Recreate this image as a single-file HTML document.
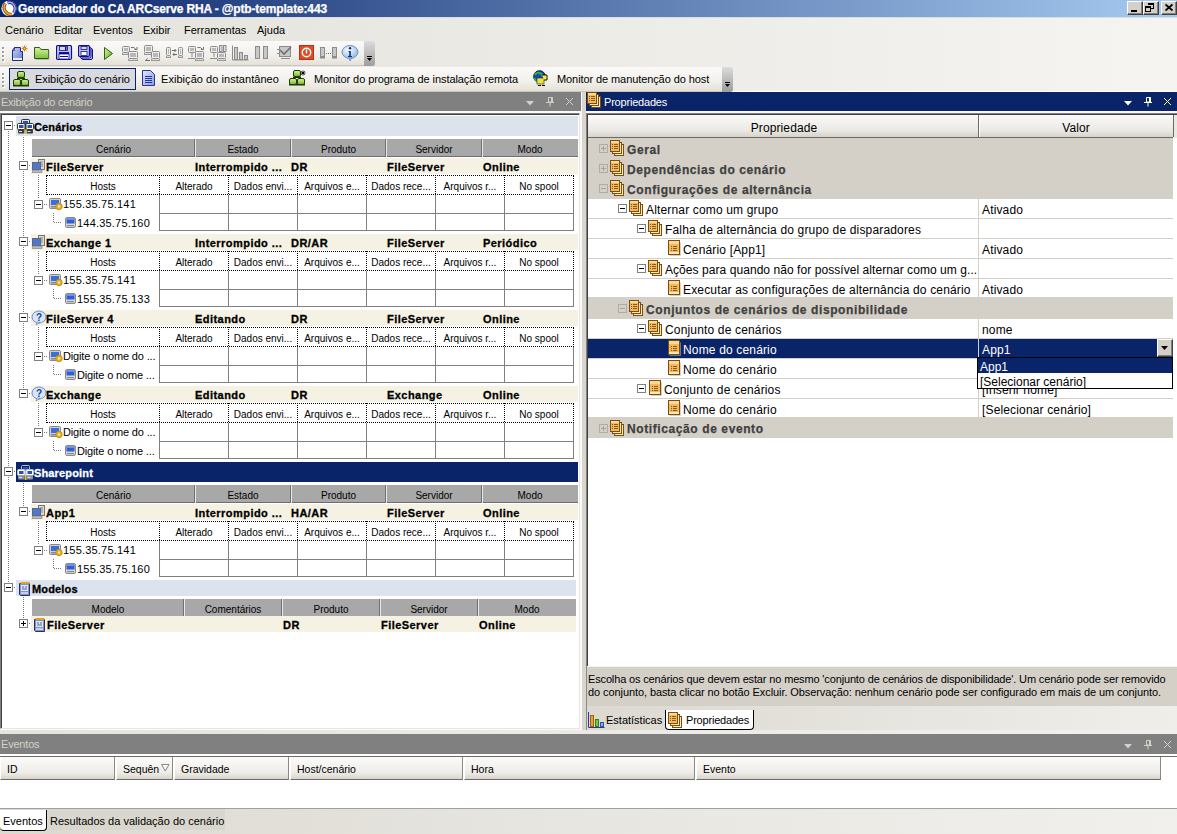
<!DOCTYPE html><html><head><meta charset="utf-8"><style>
*{margin:0;padding:0;box-sizing:border-box}
html,body{width:1177px;height:834px;overflow:hidden;background:#d4d0c8}
body{position:relative;font-family:"Liberation Sans",sans-serif;font-size:11px;color:#000}
body>div,body>svg{position:absolute}
.t{white-space:nowrap;line-height:14px;height:14px}
.b{font-weight:bold}
</style></head><body>
<div style="left:0px;top:0px;width:1177px;height:17px;background:linear-gradient(to right,#0a246a 0%,#a6caf0 100%)"></div>
<div style="left:0px;top:17px;width:1177px;height:1px;background:#d8dde6"></div>
<svg style="left:1px;top:0px" width="17" height="17" viewBox="0 0 17 17"><circle cx="8" cy="8.3" r="7.6" fill="#fff"/><path d="M4.5 3.5q-3 4 0 8t6.5 2.5" stroke="#7a4a00" stroke-width="3.2" fill="none"/><path d="M4.5 3.5q-3 4 0 8t6.5 2.5" stroke="#f0b030" stroke-width="1.6" fill="none"/><path d="M6.5 3q4-2 6.5 2t-0.5 8" stroke="#202a80" stroke-width="3" fill="none"/><path d="M6.5 3q4-2 6.5 2t-0.5 8" stroke="#a8b4f0" stroke-width="1.4" fill="none"/></svg>
<div class="t" style="left:18px;top:2px;color:#fff;font-weight:bold;font-size:12px;letter-spacing:-0.15px;-webkit-text-stroke:0.25px #fff">Gerenciador do CA ARCserve RHA - @ptb-template:443</div>
<div style="left:1127px;top:1px;width:16px;height:14px;background:#d4d0c8;border-top:1px solid #fff;border-left:1px solid #fff;border-right:1px solid #404040;border-bottom:1px solid #404040;box-shadow:inset -1px -1px 0 #808080"></div>
<div style="left:1143px;top:1px;width:16px;height:14px;background:#d4d0c8;border-top:1px solid #fff;border-left:1px solid #fff;border-right:1px solid #404040;border-bottom:1px solid #404040;box-shadow:inset -1px -1px 0 #808080"></div>
<div style="left:1161px;top:1px;width:16px;height:14px;background:#d4d0c8;border-top:1px solid #fff;border-left:1px solid #fff;border-right:1px solid #404040;border-bottom:1px solid #404040;box-shadow:inset -1px -1px 0 #808080"></div>
<svg style="left:1127px;top:0px" width="50" height="16" shape-rendering="crispEdges"><rect x="4" y="10" width="6" height="2" fill="#000"/><rect x="21" y="3" width="6" height="2" fill="#000"/><rect x="26" y="5" width="1" height="4" fill="#000"/><rect x="24" y="8" width="3" height="1" fill="#000"/><rect x="18" y="6" width="6" height="2" fill="#000"/><rect x="18" y="8" width="1" height="4" fill="#000"/><rect x="23" y="8" width="1" height="4" fill="#000"/><rect x="18" y="11" width="6" height="1" fill="#000"/></svg>
<svg style="left:1161px;top:0px" width="16" height="16"><path d="M4.5 4.5l7 6M11.5 4.5l-7 6" stroke="#000" stroke-width="1.7"/></svg>
<div style="left:0px;top:18px;width:1177px;height:73px;background:linear-gradient(to right,#e4e2db,#ecebe6 50%,#f5f4f1)"></div>
<div class="t" style="left:5px;top:23px;">Cenário</div>
<div class="t" style="left:54px;top:23px;">Editar</div>
<div class="t" style="left:93px;top:23px;">Eventos</div>
<div class="t" style="left:143px;top:23px;">Exibir</div>
<div class="t" style="left:184px;top:23px;">Ferramentas</div>
<div class="t" style="left:257px;top:23px;">Ajuda</div>
<div style="left:0px;top:91px;width:1177px;height:1px;background:#fff"></div>
<div style="left:0px;top:41px;width:375px;height:25px;background:linear-gradient(#fbfaf9,#f1efea 60%,#e2dfd6);border-radius:0 3px 3px 0;box-shadow:inset 0 -1px 0 #c9c6bd"></div>
<div style="left:364px;top:41px;width:11px;height:25px;background:linear-gradient(#dcdcdc,#9d9d9d);border-radius:0 3px 3px 0"></div>
<div style="left:0px;top:67px;width:733px;height:25px;background:linear-gradient(#fbfaf9,#f1efea 60%,#e2dfd6);border-radius:0 3px 3px 0;box-shadow:inset 0 -1px 0 #c9c6bd"></div>
<div style="left:722px;top:67px;width:11px;height:25px;background:linear-gradient(#dcdcdc,#9d9d9d);border-radius:0 3px 3px 0"></div>
<div style="left:2px;top:47px;width:2px;height:2px;background:#a0a0a0;box-shadow:1px 1px 0 #fff"></div>
<div style="left:2px;top:51px;width:2px;height:2px;background:#a0a0a0;box-shadow:1px 1px 0 #fff"></div>
<div style="left:2px;top:55px;width:2px;height:2px;background:#a0a0a0;box-shadow:1px 1px 0 #fff"></div>
<div style="left:2px;top:59px;width:2px;height:2px;background:#a0a0a0;box-shadow:1px 1px 0 #fff"></div>
<div style="left:2px;top:73px;width:2px;height:2px;background:#a0a0a0;box-shadow:1px 1px 0 #fff"></div>
<div style="left:2px;top:77px;width:2px;height:2px;background:#a0a0a0;box-shadow:1px 1px 0 #fff"></div>
<div style="left:2px;top:81px;width:2px;height:2px;background:#a0a0a0;box-shadow:1px 1px 0 #fff"></div>
<div style="left:2px;top:85px;width:2px;height:2px;background:#a0a0a0;box-shadow:1px 1px 0 #fff"></div>
<svg style="left:366px;top:56px" width="8" height="7"><rect x="1" y="0" width="5" height="1" fill="#000"/><path d="M1 2h5l-2.5 3z" fill="#000"/></svg>
<svg style="left:724px;top:82px" width="8" height="7"><rect x="1" y="0" width="5" height="1" fill="#000"/><path d="M1 2h5l-2.5 3z" fill="#000"/></svg>
<div style="left:9px;top:68px;width:127px;height:22px;background:#d8dae0;border:1px solid #0a246a"></div>
<svg style="left:11px;top:45px" width="17" height="17" viewBox="0 0 17 17"><defs><linearGradient id="nd" x1="0" y1="0" x2="1" y2="1"><stop offset="0" stop-color="#c8d4f4"/><stop offset="1" stop-color="#6878d0"/></linearGradient></defs><path d="M3.5 2.5h6v4h2v9h-10v-10z" fill="url(#nd)" stroke="#1c2c8c"/><path d="M1.5 5.5l2-3v3z" fill="#fff" stroke="#1c2c8c" stroke-width="0.8"/><rect x="2" y="13" width="9" height="2" fill="#e8ecff"/><path d="M13.5 0.5v6M10.5 3.5h6M11.4 1.4l4.2 4.2M15.6 1.4l-4.2 4.2" stroke="#d88000" stroke-width="0.9"/><circle cx="13.5" cy="3.5" r="1.3" fill="#ffd040" stroke="#a05000" stroke-width="0.6"/></svg>
<svg style="left:33px;top:46px" width="17" height="14" viewBox="0 0 17 14"><defs><linearGradient id="fo" x1="0" y1="0" x2="0" y2="1"><stop offset="0" stop-color="#d8f4a8"/><stop offset="1" stop-color="#78c038"/></linearGradient></defs><path d="M1.5 1.5h5l1.5 2h7.5v9h-14z" fill="url(#fo)" stroke="#2c5c10"/><path d="M2.5 13.5h13.5v-9" stroke="#a0a890" fill="none" opacity="0.7"/></svg>
<svg style="left:56px;top:45px" width="17" height="16" viewBox="0 0 17 16"><rect x="0.5" y="0.5" width="15" height="14" rx="1.5" fill="#c0c4f0" stroke="#10108c" stroke-width="1.2"/><rect x="3.5" y="1.5" width="8" height="4" fill="#d8d8d8" stroke="#10108c" stroke-width="0.8"/><rect x="9" y="2" width="1.5" height="3" fill="#10108c"/><rect x="3" y="7" width="10" height="2" fill="#10108c"/><rect x="3" y="9" width="10" height="5" fill="#ffffff" stroke="#10108c" stroke-width="0.8"/><path d="M4 11.5h8" stroke="#10108c"/></svg>
<svg style="left:78px;top:45px" width="17" height="16" viewBox="0 0 17 16"><rect x="3.5" y="3.5" width="11" height="11" rx="1.5" fill="#c0c4f0" stroke="#10108c"/><rect x="2" y="2" width="11" height="11" rx="1.5" fill="#c0c4f0" stroke="#10108c"/><rect x="0.5" y="0.5" width="11" height="11" rx="1.5" fill="#c0c4f0" stroke="#10108c" stroke-width="1.2"/><rect x="3" y="1.5" width="6" height="3" fill="#d8d8d8" stroke="#10108c" stroke-width="0.8"/><rect x="3" y="6.5" width="6" height="4" fill="#fff" stroke="#10108c" stroke-width="0.8"/></svg>
<svg style="left:103px;top:46px" width="11" height="15" viewBox="0 0 11 15"><defs><linearGradient id="pl" x1="0" y1="0" x2="1" y2="1"><stop offset="0" stop-color="#d8f8a0"/><stop offset="1" stop-color="#58a818"/></linearGradient></defs><path d="M1.5 1.5l8 6-8 6z" fill="url(#pl)" stroke="#2c6410" stroke-linejoin="round"/></svg>
<svg style="left:122px;top:45px" width="17" height="17" viewBox="0 0 17 17"><rect x="0.5" y="1.5" width="7" height="6" rx="1" fill="#eeeeee" stroke="#8c8c8c"/><rect x="2" y="3" width="4" height="3" fill="#b8b8b8"/><rect x="0" y="8" width="8" height="2" fill="#9a9a9a"/><rect x="1" y="8" width="6" height="1" fill="#dcdcdc"/><rect x="6.5" y="6.5" width="9" height="7" rx="1" fill="#eeeeee" stroke="#8c8c8c"/><rect x="8" y="8" width="6" height="4" fill="#b8b8b8"/><rect x="6" y="14" width="10" height="2" fill="#9a9a9a"/><rect x="7" y="14" width="8" height="1" fill="#dcdcdc"/><path d="M9 2.5q3.5-1 5.5 2.5" stroke="#6e6e6e" fill="none" stroke-width="1"/><path d="M12.5 4.5h2.5v-2.5" stroke="#6e6e6e" fill="none" stroke-width="1"/></svg>
<svg style="left:144px;top:45px" width="17" height="17" viewBox="0 0 17 17"><rect x="0.5" y="0.5" width="8" height="7" rx="1" fill="#eeeeee" stroke="#8c8c8c"/><rect x="2" y="2" width="5" height="4" fill="#b8b8b8"/><rect x="0" y="8" width="9" height="2" fill="#9a9a9a"/><rect x="1" y="8" width="7" height="1" fill="#dcdcdc"/><rect x="7.5" y="6.5" width="8" height="7" rx="1" fill="#eeeeee" stroke="#8c8c8c"/><rect x="9" y="8" width="5" height="4" fill="#b8b8b8"/><rect x="7" y="14" width="9" height="2" fill="#9a9a9a"/><rect x="8" y="14" width="7" height="1" fill="#dcdcdc"/><path d="M6 15.5h-4.5l0-0M1.5 15.5l2-2" stroke="#6e6e6e" fill="none" stroke-width="1"/></svg>
<svg style="left:166px;top:46px" width="17" height="14" viewBox="0 0 17 14"><rect x="0.5" y="1.5" width="4" height="8" rx="1" fill="#eeeeee" stroke="#8c8c8c"/><rect x="2" y="3" width="1" height="5" fill="#b8b8b8"/><rect x="0" y="10" width="5" height="2" fill="#9a9a9a"/><rect x="1" y="10" width="3" height="1" fill="#dcdcdc"/><rect x="12.5" y="1.5" width="4" height="8" rx="1" fill="#eeeeee" stroke="#8c8c8c"/><rect x="14" y="3" width="1" height="5" fill="#b8b8b8"/><rect x="12" y="10" width="5" height="2" fill="#9a9a9a"/><rect x="13" y="10" width="3" height="1" fill="#dcdcdc"/><path d="M6 4.5h4M8.5 3l1.5 1.5-1.5 1.5M11 8.5h-4M8.5 7l-1.5 1.5 1.5 1.5" stroke="#6e6e6e" fill="none" stroke-width="1"/></svg>
<svg style="left:188px;top:45px" width="17" height="17" viewBox="0 0 17 17"><rect x="0.5" y="1.5" width="7" height="6" rx="1" fill="#eeeeee" stroke="#8c8c8c"/><rect x="2" y="3" width="4" height="3" fill="#b8b8b8"/><path d="M4 8v4M0 13.5h7" stroke="#8c8c8c"/><rect x="7.5" y="6.5" width="8" height="7" rx="1" fill="#eeeeee" stroke="#8c8c8c"/><rect x="9" y="8" width="5" height="4" fill="#b8b8b8"/><rect x="7" y="14" width="9" height="2" fill="#9a9a9a"/><rect x="8" y="14" width="7" height="1" fill="#dcdcdc"/><path d="M9.5 2.5q3.5-1 5.5 2.5" stroke="#6e6e6e" fill="none" stroke-width="1"/><path d="M13 4.5h2.5v-2.5" stroke="#6e6e6e" fill="none" stroke-width="1"/></svg>
<svg style="left:210px;top:45px" width="17" height="17" viewBox="0 0 17 17"><rect x="0.5" y="1.5" width="7" height="6" rx="1" fill="#eeeeee" stroke="#8c8c8c"/><rect x="2" y="3" width="4" height="3" fill="#b8b8b8"/><path d="M4 8v4M0 13.5h7" stroke="#8c8c8c"/><rect x="9.5" y="0.5" width="2.5" height="6" fill="#e0e0e0" stroke="#8c8c8c"/><rect x="13.5" y="0.5" width="2.5" height="6" fill="#e0e0e0" stroke="#8c8c8c"/><rect x="7.5" y="7.5" width="8" height="6" rx="1" fill="#eeeeee" stroke="#8c8c8c"/><rect x="9" y="9" width="5" height="3" fill="#b8b8b8"/><rect x="7" y="14" width="9" height="2" fill="#9a9a9a"/><rect x="8" y="14" width="7" height="1" fill="#dcdcdc"/></svg>
<svg style="left:232px;top:45px" width="17" height="16" viewBox="0 0 17 16"><path d="M0.5 0.5v14.5h16" stroke="#8c8c8c" fill="none"/><rect x="2.5" y="2.5" width="3" height="12" fill="#c8c8c8" stroke="#8c8c8c"/><rect x="7.5" y="7.5" width="3" height="7" fill="#c8c8c8" stroke="#8c8c8c"/><rect x="12.5" y="10.5" width="3" height="4" fill="#c8c8c8" stroke="#8c8c8c"/></svg>
<svg style="left:255px;top:46px" width="14" height="14" viewBox="0 0 14 14"><rect x="0.5" y="0.5" width="4" height="12" fill="#c8c8c8" stroke="#8c8c8c"/><rect x="8.5" y="0.5" width="4" height="12" fill="#c8c8c8" stroke="#8c8c8c"/></svg>
<svg style="left:276px;top:45px" width="16" height="16" viewBox="0 0 16 16"><rect x="3.5" y="1.5" width="11" height="10" fill="#c8c8c8" stroke="#8c8c8c"/><path d="M4 5l4 4 7-7" stroke="#707070" stroke-width="1.6" fill="none"/><path d="M1 4.5h2M1 8.5h2M5 13.5h9" stroke="#8c8c8c"/></svg>
<svg style="left:299px;top:45px" width="15" height="15" viewBox="0 0 15 15"><rect x="0" y="0" width="15" height="15" fill="#e04c28"/><rect x="0.5" y="0.5" width="14" height="14" fill="none" stroke="#b83010"/><circle cx="7.5" cy="7.5" r="4.2" fill="none" stroke="#fff" stroke-width="1.4"/><path d="M7.5 4.5v4" stroke="#fff" stroke-width="1.4"/></svg>
<svg style="left:320px;top:46px" width="17" height="14" viewBox="0 0 17 14"><rect x="0.5" y="1.5" width="4" height="9" fill="#c8c8c8" stroke="#8c8c8c"/><rect x="12.5" y="1.5" width="4" height="9" fill="#c8c8c8" stroke="#8c8c8c"/><rect x="0" y="11" width="5" height="1.5" fill="#8c8c8c"/><rect x="12" y="11" width="5" height="1.5" fill="#8c8c8c"/><path d="M6 7.5h1M8 7.5h1M10 7.5h1" stroke="#707070"/></svg>
<svg style="left:341px;top:45px" width="18" height="17" viewBox="0 0 18 17"><defs><radialGradient id="inf" cx="0.4" cy="0.35" r="0.7"><stop offset="0" stop-color="#ffffff"/><stop offset="1" stop-color="#8cb4e8"/></radialGradient></defs><ellipse cx="9" cy="7" rx="8" ry="6.5" fill="url(#inf)" stroke="#7090c0"/><path d="M8 13l1 3 2-3.5z" fill="#a8c4ec" stroke="#7090c0" stroke-width="0.8"/><circle cx="9" cy="3.2" r="1.2" fill="#102c90"/><path d="M7.5 6h2.3v5h1.2v1h-4v-1h1.2v-4h-0.7z" fill="#102c90"/></svg>
<svg style="left:13px;top:71px" width="17" height="16" viewBox="0 0 17 16"><defs><linearGradient id="gn" x1="0" y1="0" x2="0" y2="1"><stop offset="0" stop-color="#d8f4a0"/><stop offset="1" stop-color="#78b828"/></linearGradient></defs><rect x="4.5" y="0.5" width="7" height="6" rx="1.5" fill="url(#gn)" stroke="#1c3c00"/><rect x="4" y="6.5" width="8" height="1.5" fill="#1c3c00"/><rect x="0.5" y="8.5" width="7" height="6" rx="1.5" fill="url(#gn)" stroke="#1c3c00"/><rect x="0" y="14" width="8" height="1.5" fill="#1c3c00"/><rect x="8.5" y="8.5" width="7" height="6" rx="1.5" fill="url(#gn)" stroke="#1c3c00"/><rect x="8" y="14" width="8" height="1.5" fill="#1c3c00"/></svg>
<svg style="left:289px;top:70px" width="17" height="16" viewBox="0 0 17 16"><defs><linearGradient id="gn" x1="0" y1="0" x2="0" y2="1"><stop offset="0" stop-color="#d8f4a0"/><stop offset="1" stop-color="#78b828"/></linearGradient></defs><rect x="4.5" y="0.5" width="7" height="6" rx="1.5" fill="url(#gn)" stroke="#1c3c00"/><rect x="4" y="6.5" width="8" height="1.5" fill="#1c3c00"/><rect x="0.5" y="8.5" width="7" height="6" rx="1.5" fill="url(#gn)" stroke="#1c3c00"/><rect x="0" y="14" width="8" height="1.5" fill="#1c3c00"/><rect x="8.5" y="8.5" width="7" height="6" rx="1.5" fill="url(#gn)" stroke="#1c3c00"/><rect x="8" y="14" width="8" height="1.5" fill="#1c3c00"/><path d="M14 0.5v5M11.5 3h5M12.3 1.3l3.4 3.4M15.7 1.3l-3.4 3.4" stroke="#000" stroke-width="0.9"/></svg>
<svg style="left:142px;top:70px" width="14" height="16" viewBox="0 0 14 16"><defs><linearGradient id="dc" x1="0" y1="0" x2="1" y2="1"><stop offset="0" stop-color="#e0e8ff"/><stop offset="1" stop-color="#8898e0"/></linearGradient></defs><path d="M0.5 0.5h8l4 4v11h-12z" fill="url(#dc)" stroke="#283890"/><path d="M3 6.5h7M3 8.5h7M3 10.5h7M3 12.5h7" stroke="#283890"/></svg>
<svg style="left:533px;top:70px" width="17" height="17" viewBox="0 0 17 17"><circle cx="6.5" cy="6.5" r="5.8" fill="#1848c0" stroke="#000" stroke-width="0.9"/><path d="M1.5 5q2-3 5-2t3 3M1 8q2 3 4 4" stroke="#30b040" stroke-width="2" fill="none"/><rect x="4" y="8" width="7" height="6" fill="#f0e040" stroke="#222" stroke-width="0.6"/><path d="M9 5h5v5h-3" fill="#f8f040" stroke="#000" stroke-width="0.9"/><path d="M5 15.5h3M9 15.5h3" stroke="#000"/></svg>
<div class="t" style="left:35px;top:72px;letter-spacing:-0.06px">Exibição do cenário</div>
<div class="t" style="left:161px;top:72px;letter-spacing:0.05px">Exibição do instantâneo</div>
<div class="t" style="left:314px;top:72px;letter-spacing:-0.08px">Monitor do programa de instalação remota</div>
<div class="t" style="left:557px;top:72px;letter-spacing:-0.09px">Monitor de manutenção do host</div>
<div style="left:0px;top:92px;width:581px;height:19px;background:#808080"></div>
<div class="t" style="left:1px;top:95px;color:#d4d0c8;letter-spacing:-0.25px">Exibição do cenário</div>
<div style="left:581px;top:92px;width:5px;height:638px;background:#d9d6cf;border-left:1px solid #fbfaf8"></div>
<div style="left:586px;top:92px;width:591px;height:19px;background:#0a246a"></div>
<svg style="left:587px;top:92px" width="15" height="17" viewBox="0 0 15 17"><rect x="4.5" y="4.5" width="9" height="11" fill="#fde8b8" stroke="#7a4e0c"/><rect x="2.5" y="2.5" width="9" height="11" fill="#fde8b8" stroke="#7a4e0c"/><rect x="0.5" y="0.5" width="9" height="11" fill="#f3b862" stroke="#7a4e0c"/><rect x="1" y="1" width="8" height="2" fill="#fcd898"/><path d="M2 4.5h1M4 4.5h4M2 6.5h1M4 6.5h4M2 8.5h1M4 8.5h4" stroke="#8a5a10"/></svg>
<div class="t" style="left:604px;top:95px;color:#fff;letter-spacing:-0.2px">Propriedades</div>
<svg style="left:524px;top:95px" width="52" height="13"><path d="M2 6h8l-4 4.5z" fill="#d4d0c8"/><path d="M24.5 2.5h4v4.5h-4z" fill="none" stroke="#d4d0c8"/><rect x="27" y="2" width="1.2" height="5" fill="#d4d0c8"/><path d="M22 7.5h8M26 8v3.5" stroke="#d4d0c8" fill="none"/><path d="M42 3l7 7M49 3l-7 7" stroke="#d4d0c8" stroke-width="1"/></svg>
<svg style="left:1122px;top:95px" width="52" height="13"><path d="M2 6h8l-4 4.5z" fill="#fff"/><path d="M24.5 2.5h4v4.5h-4z" fill="none" stroke="#fff"/><rect x="27" y="2" width="1.2" height="5" fill="#fff"/><path d="M22 7.5h8M26 8v3.5" stroke="#fff" fill="none"/><path d="M42 3l7 7M49 3l-7 7" stroke="#fff" stroke-width="1"/></svg>
<div style="left:0px;top:111px;width:581px;height:619px;background:#fbfaf8"></div>
<div style="left:0px;top:113px;width:580px;height:616px;background:#fff;border-left:1px solid #808080;border-top:1px solid #808080;box-shadow:inset 1px 1px 0 #404040;border-right:1px solid #e8e6e0;border-bottom:1px solid #e8e6e0"></div>
<div style="left:8px;top:131px;width:1px;height:452px;background:repeating-linear-gradient(#7a7a7a 0 1px,transparent 1px 2px)"></div>
<div style="left:16px;top:116px;width:562px;height:20px;background:#dce3ec"></div>
<div style="left:4px;top:121px;width:9px;height:9px;border:1px solid #808080;background:#fff"></div>
<div style="left:6px;top:125px;width:5px;height:1px;background:#000"></div>
<div style="left:14px;top:125px;width:2px;height:1px;background:repeating-linear-gradient(to right,#7a7a7a 0 1px,transparent 1px 2px)"></div>
<svg style="left:17px;top:119px" width="17" height="16" viewBox="0 0 17 16"><path d="M4.5 5v-3.5q0-1 1-1h6q1 0 1 1v3.5" fill="none" stroke="#303030"/><rect x="6" y="2" width="5" height="3" fill="#3050b0"/><path d="M8.5 5v6" stroke="#303030" stroke-width="1.2"/><rect x="0.5" y="4.5" width="7.5" height="6" rx="1.2" fill="#fff" stroke="#303030"/><rect x="9" y="4.5" width="7.5" height="6" rx="1.2" fill="#fff" stroke="#303030"/><rect x="2" y="6" width="4.5" height="3" fill="#3050b0"/><rect x="10.5" y="6" width="4.5" height="3" fill="#3050b0"/><rect x="1" y="10.5" width="6.5" height="4" rx="1" fill="#3a3a3a"/><rect x="9.5" y="10.5" width="6.5" height="4" rx="1" fill="#3a3a3a"/><path d="M2 12.5h3M10.5 12.5h3" stroke="#e0e0e0"/><rect x="7.7" y="10.5" width="1.8" height="4.5" fill="#e0c820"/></svg>
<div class="t" style="left:34px;top:120px;font-weight:bold;letter-spacing:0.15px;-webkit-text-stroke:0.3px #000">Cenários</div>
<div style="left:23px;top:137px;width:1px;height:254px;background:repeating-linear-gradient(#7a7a7a 0 1px,transparent 1px 2px)"></div>
<div style="left:32px;top:139px;width:546px;height:18px;background:#a8a8a8;border-bottom:1px solid #6e6e6e"></div>
<div class="t" style="left:32px;top:143px;width:163px;text-align:center;font-size:10px">Cenário</div>
<div style="left:194px;top:139px;width:1px;height:18px;background:#707070"></div>
<div style="left:195px;top:139px;width:1px;height:18px;background:#e8e8e8"></div>
<div class="t" style="left:195px;top:143px;width:96px;text-align:center;font-size:10px">Estado</div>
<div style="left:290px;top:139px;width:1px;height:18px;background:#707070"></div>
<div style="left:291px;top:139px;width:1px;height:18px;background:#e8e8e8"></div>
<div class="t" style="left:291px;top:143px;width:95px;text-align:center;font-size:10px">Produto</div>
<div style="left:385px;top:139px;width:1px;height:18px;background:#707070"></div>
<div style="left:386px;top:139px;width:1px;height:18px;background:#e8e8e8"></div>
<div class="t" style="left:386px;top:143px;width:96px;text-align:center;font-size:10px">Servidor</div>
<div style="left:481px;top:139px;width:1px;height:18px;background:#707070"></div>
<div style="left:482px;top:139px;width:1px;height:18px;background:#e8e8e8"></div>
<div class="t" style="left:482px;top:143px;width:96px;text-align:center;font-size:10px">Modo</div>
<div style="left:31px;top:158px;width:547px;height:16px;background:#f5f2e3"></div>
<div style="left:19px;top:161px;width:9px;height:9px;border:1px solid #808080;background:#fff"></div>
<div style="left:21px;top:165px;width:5px;height:1px;background:#000"></div>
<div style="left:29px;top:165px;width:2px;height:1px;background:repeating-linear-gradient(to right,#7a7a7a 0 1px,transparent 1px 2px)"></div>
<svg style="left:32px;top:159px" width="14" height="14" viewBox="0 0 14 14"><rect x="6.5" y="0.5" width="6" height="10" fill="#d8d8d8" stroke="#777"/><path d="M8 3h3M8 5h3M8 7h3" stroke="#888"/><rect x="0.5" y="3.5" width="8" height="7" fill="#4a78d8" stroke="#666"/><rect x="0" y="11" width="10" height="2.5" fill="#bbb" stroke="#777" stroke-width="0.6"/></svg>
<div class="t" style="left:46px;top:160px;font-weight:bold;letter-spacing:0.45px;-webkit-text-stroke:0.3px #000">FileServer</div>
<div class="t" style="left:195px;top:160px;font-weight:bold;letter-spacing:0.45px;-webkit-text-stroke:0.3px #000">Interrompido ...</div>
<div class="t" style="left:291px;top:160px;font-weight:bold;letter-spacing:0.45px;-webkit-text-stroke:0.3px #000">DR</div>
<div class="t" style="left:387px;top:160px;font-weight:bold;letter-spacing:0.45px;-webkit-text-stroke:0.3px #000">FileServer</div>
<div class="t" style="left:483px;top:160px;font-weight:bold;letter-spacing:0.45px;-webkit-text-stroke:0.3px #000">Online</div>
<div style="left:46px;top:175px;width:528px;height:20px;border:1px dotted #000"></div>
<div style="left:159px;top:175px;width:1px;height:20px;background:repeating-linear-gradient(#000 0 1px,transparent 1px 2px)"></div>
<div style="left:228px;top:175px;width:1px;height:20px;background:repeating-linear-gradient(#000 0 1px,transparent 1px 2px)"></div>
<div style="left:297px;top:175px;width:1px;height:20px;background:repeating-linear-gradient(#000 0 1px,transparent 1px 2px)"></div>
<div style="left:366px;top:175px;width:1px;height:20px;background:repeating-linear-gradient(#000 0 1px,transparent 1px 2px)"></div>
<div style="left:435px;top:175px;width:1px;height:20px;background:repeating-linear-gradient(#000 0 1px,transparent 1px 2px)"></div>
<div style="left:504px;top:175px;width:1px;height:20px;background:repeating-linear-gradient(#000 0 1px,transparent 1px 2px)"></div>
<div class="t" style="left:47px;top:180px;width:112px;text-align:center;font-size:10px">Hosts</div>
<div class="t" style="left:160px;top:180px;width:68px;text-align:center;font-size:10px">Alterado</div>
<div class="t" style="left:229px;top:180px;width:68px;text-align:center;font-size:10px">Dados envi...</div>
<div class="t" style="left:298px;top:180px;width:68px;text-align:center;font-size:10px">Arquivos e...</div>
<div class="t" style="left:367px;top:180px;width:68px;text-align:center;font-size:10px">Dados rece...</div>
<div class="t" style="left:436px;top:180px;width:68px;text-align:center;font-size:10px">Arquivos r...</div>
<div class="t" style="left:505px;top:180px;width:68px;text-align:center;font-size:10px">No spool</div>
<div style="left:159px;top:195px;width:415px;height:36px;border:1px solid #808080;border-top:none"></div>
<div style="left:159px;top:213px;width:415px;height:1px;background:#808080"></div>
<div style="left:228px;top:195px;width:1px;height:36px;background:#808080"></div>
<div style="left:297px;top:195px;width:1px;height:36px;background:#808080"></div>
<div style="left:366px;top:195px;width:1px;height:36px;background:#808080"></div>
<div style="left:435px;top:195px;width:1px;height:36px;background:#808080"></div>
<div style="left:504px;top:195px;width:1px;height:36px;background:#808080"></div>
<div style="left:38px;top:175px;width:1px;height:24px;background:repeating-linear-gradient(#7a7a7a 0 1px,transparent 1px 2px)"></div>
<div style="left:34px;top:200px;width:9px;height:9px;border:1px solid #808080;background:#fff"></div>
<div style="left:36px;top:204px;width:5px;height:1px;background:#000"></div>
<div style="left:44px;top:204px;width:4px;height:1px;background:repeating-linear-gradient(to right,#7a7a7a 0 1px,transparent 1px 2px)"></div>
<svg style="left:49px;top:198px" width="14" height="12" viewBox="0 0 14 12"><rect x="0.5" y="0.5" width="11" height="10" rx="1" fill="#cfcfcf" stroke="#888"/><rect x="2" y="2" width="8" height="5" fill="#3b6fd8"/><rect x="2" y="8" width="6" height="1.5" fill="#888"/><circle cx="10" cy="8.5" r="3.2" fill="#f0b020" stroke="#c08000" stroke-width="0.8"/><circle cx="10" cy="8.5" r="1" fill="#fff"/></svg>
<div class="t" style="left:63px;top:197px;letter-spacing:0.2px">155.35.75.141</div>
<div style="left:53px;top:213px;width:1px;height:9px;background:repeating-linear-gradient(#7a7a7a 0 1px,transparent 1px 2px)"></div>
<div style="left:54px;top:222px;width:7px;height:1px;background:repeating-linear-gradient(to right,#7a7a7a 0 1px,transparent 1px 2px)"></div>
<svg style="left:65px;top:217px" width="11" height="11" viewBox="0 0 11 11"><rect x="0.5" y="0.5" width="10" height="10" rx="1.5" fill="#d8d8d8" stroke="#8a8a8a"/><rect x="1.5" y="1.5" width="8" height="5" fill="#2e5ed0"/><rect x="1.5" y="1.5" width="8" height="1.5" fill="#6a90e8"/><rect x="2" y="8" width="7" height="1.2" fill="#8a8a8a"/></svg>
<div class="t" style="left:77px;top:216px;letter-spacing:0.2px">144.35.75.160</div>
<div style="left:31px;top:234px;width:547px;height:16px;background:#f5f2e3"></div>
<div style="left:19px;top:237px;width:9px;height:9px;border:1px solid #808080;background:#fff"></div>
<div style="left:21px;top:241px;width:5px;height:1px;background:#000"></div>
<div style="left:29px;top:241px;width:2px;height:1px;background:repeating-linear-gradient(to right,#7a7a7a 0 1px,transparent 1px 2px)"></div>
<svg style="left:32px;top:235px" width="14" height="14" viewBox="0 0 14 14"><rect x="6.5" y="0.5" width="6" height="10" fill="#d8d8d8" stroke="#777"/><path d="M8 3h3M8 5h3M8 7h3" stroke="#888"/><rect x="0.5" y="3.5" width="8" height="7" fill="#4a78d8" stroke="#666"/><rect x="0" y="11" width="10" height="2.5" fill="#bbb" stroke="#777" stroke-width="0.6"/></svg>
<div class="t" style="left:46px;top:236px;font-weight:bold;letter-spacing:0.45px;-webkit-text-stroke:0.3px #000">Exchange 1</div>
<div class="t" style="left:195px;top:236px;font-weight:bold;letter-spacing:0.45px;-webkit-text-stroke:0.3px #000">Interrompido ...</div>
<div class="t" style="left:291px;top:236px;font-weight:bold;letter-spacing:0.45px;-webkit-text-stroke:0.3px #000">DR/AR</div>
<div class="t" style="left:387px;top:236px;font-weight:bold;letter-spacing:0.45px;-webkit-text-stroke:0.3px #000">FileServer</div>
<div class="t" style="left:483px;top:236px;font-weight:bold;letter-spacing:0.45px;-webkit-text-stroke:0.3px #000">Periódico</div>
<div style="left:46px;top:251px;width:528px;height:20px;border:1px dotted #000"></div>
<div style="left:159px;top:251px;width:1px;height:20px;background:repeating-linear-gradient(#000 0 1px,transparent 1px 2px)"></div>
<div style="left:228px;top:251px;width:1px;height:20px;background:repeating-linear-gradient(#000 0 1px,transparent 1px 2px)"></div>
<div style="left:297px;top:251px;width:1px;height:20px;background:repeating-linear-gradient(#000 0 1px,transparent 1px 2px)"></div>
<div style="left:366px;top:251px;width:1px;height:20px;background:repeating-linear-gradient(#000 0 1px,transparent 1px 2px)"></div>
<div style="left:435px;top:251px;width:1px;height:20px;background:repeating-linear-gradient(#000 0 1px,transparent 1px 2px)"></div>
<div style="left:504px;top:251px;width:1px;height:20px;background:repeating-linear-gradient(#000 0 1px,transparent 1px 2px)"></div>
<div class="t" style="left:47px;top:256px;width:112px;text-align:center;font-size:10px">Hosts</div>
<div class="t" style="left:160px;top:256px;width:68px;text-align:center;font-size:10px">Alterado</div>
<div class="t" style="left:229px;top:256px;width:68px;text-align:center;font-size:10px">Dados envi...</div>
<div class="t" style="left:298px;top:256px;width:68px;text-align:center;font-size:10px">Arquivos e...</div>
<div class="t" style="left:367px;top:256px;width:68px;text-align:center;font-size:10px">Dados rece...</div>
<div class="t" style="left:436px;top:256px;width:68px;text-align:center;font-size:10px">Arquivos r...</div>
<div class="t" style="left:505px;top:256px;width:68px;text-align:center;font-size:10px">No spool</div>
<div style="left:159px;top:271px;width:415px;height:36px;border:1px solid #808080;border-top:none"></div>
<div style="left:159px;top:289px;width:415px;height:1px;background:#808080"></div>
<div style="left:228px;top:271px;width:1px;height:36px;background:#808080"></div>
<div style="left:297px;top:271px;width:1px;height:36px;background:#808080"></div>
<div style="left:366px;top:271px;width:1px;height:36px;background:#808080"></div>
<div style="left:435px;top:271px;width:1px;height:36px;background:#808080"></div>
<div style="left:504px;top:271px;width:1px;height:36px;background:#808080"></div>
<div style="left:38px;top:251px;width:1px;height:24px;background:repeating-linear-gradient(#7a7a7a 0 1px,transparent 1px 2px)"></div>
<div style="left:34px;top:276px;width:9px;height:9px;border:1px solid #808080;background:#fff"></div>
<div style="left:36px;top:280px;width:5px;height:1px;background:#000"></div>
<div style="left:44px;top:280px;width:4px;height:1px;background:repeating-linear-gradient(to right,#7a7a7a 0 1px,transparent 1px 2px)"></div>
<svg style="left:49px;top:274px" width="14" height="12" viewBox="0 0 14 12"><rect x="0.5" y="0.5" width="11" height="10" rx="1" fill="#cfcfcf" stroke="#888"/><rect x="2" y="2" width="8" height="5" fill="#3b6fd8"/><rect x="2" y="8" width="6" height="1.5" fill="#888"/><circle cx="10" cy="8.5" r="3.2" fill="#f0b020" stroke="#c08000" stroke-width="0.8"/><circle cx="10" cy="8.5" r="1" fill="#fff"/></svg>
<div class="t" style="left:63px;top:273px;letter-spacing:0.2px">155.35.75.141</div>
<div style="left:53px;top:289px;width:1px;height:9px;background:repeating-linear-gradient(#7a7a7a 0 1px,transparent 1px 2px)"></div>
<div style="left:54px;top:298px;width:7px;height:1px;background:repeating-linear-gradient(to right,#7a7a7a 0 1px,transparent 1px 2px)"></div>
<svg style="left:65px;top:293px" width="11" height="11" viewBox="0 0 11 11"><rect x="0.5" y="0.5" width="10" height="10" rx="1.5" fill="#d8d8d8" stroke="#8a8a8a"/><rect x="1.5" y="1.5" width="8" height="5" fill="#2e5ed0"/><rect x="1.5" y="1.5" width="8" height="1.5" fill="#6a90e8"/><rect x="2" y="8" width="7" height="1.2" fill="#8a8a8a"/></svg>
<div class="t" style="left:77px;top:292px;letter-spacing:0.2px">155.35.75.133</div>
<div style="left:31px;top:310px;width:547px;height:16px;background:#f5f2e3"></div>
<div style="left:19px;top:313px;width:9px;height:9px;border:1px solid #808080;background:#fff"></div>
<div style="left:21px;top:317px;width:5px;height:1px;background:#000"></div>
<div style="left:29px;top:317px;width:2px;height:1px;background:repeating-linear-gradient(to right,#7a7a7a 0 1px,transparent 1px 2px)"></div>
<svg style="left:31px;top:310px" width="16" height="16" viewBox="0 0 16 16"><ellipse cx="8" cy="7" rx="7" ry="6" fill="#d8e6f8" stroke="#6f8fbf"/><path d="M6 12l-1 3 4-2.5z" fill="#d8e6f8" stroke="#6f8fbf" stroke-width="0.8"/><text x="8" y="11" font-family="Liberation Sans" font-weight="bold" font-size="10" text-anchor="middle" fill="#2040a0">?</text></svg>
<div class="t" style="left:46px;top:312px;font-weight:bold;letter-spacing:0.45px;-webkit-text-stroke:0.3px #000">FileServer 4</div>
<div class="t" style="left:195px;top:312px;font-weight:bold;letter-spacing:0.45px;-webkit-text-stroke:0.3px #000">Editando</div>
<div class="t" style="left:291px;top:312px;font-weight:bold;letter-spacing:0.45px;-webkit-text-stroke:0.3px #000">DR</div>
<div class="t" style="left:387px;top:312px;font-weight:bold;letter-spacing:0.45px;-webkit-text-stroke:0.3px #000">FileServer</div>
<div class="t" style="left:483px;top:312px;font-weight:bold;letter-spacing:0.45px;-webkit-text-stroke:0.3px #000">Online</div>
<div style="left:46px;top:327px;width:528px;height:20px;border:1px dotted #000"></div>
<div style="left:159px;top:327px;width:1px;height:20px;background:repeating-linear-gradient(#000 0 1px,transparent 1px 2px)"></div>
<div style="left:228px;top:327px;width:1px;height:20px;background:repeating-linear-gradient(#000 0 1px,transparent 1px 2px)"></div>
<div style="left:297px;top:327px;width:1px;height:20px;background:repeating-linear-gradient(#000 0 1px,transparent 1px 2px)"></div>
<div style="left:366px;top:327px;width:1px;height:20px;background:repeating-linear-gradient(#000 0 1px,transparent 1px 2px)"></div>
<div style="left:435px;top:327px;width:1px;height:20px;background:repeating-linear-gradient(#000 0 1px,transparent 1px 2px)"></div>
<div style="left:504px;top:327px;width:1px;height:20px;background:repeating-linear-gradient(#000 0 1px,transparent 1px 2px)"></div>
<div class="t" style="left:47px;top:332px;width:112px;text-align:center;font-size:10px">Hosts</div>
<div class="t" style="left:160px;top:332px;width:68px;text-align:center;font-size:10px">Alterado</div>
<div class="t" style="left:229px;top:332px;width:68px;text-align:center;font-size:10px">Dados envi...</div>
<div class="t" style="left:298px;top:332px;width:68px;text-align:center;font-size:10px">Arquivos e...</div>
<div class="t" style="left:367px;top:332px;width:68px;text-align:center;font-size:10px">Dados rece...</div>
<div class="t" style="left:436px;top:332px;width:68px;text-align:center;font-size:10px">Arquivos r...</div>
<div class="t" style="left:505px;top:332px;width:68px;text-align:center;font-size:10px">No spool</div>
<div style="left:159px;top:347px;width:415px;height:36px;border:1px solid #808080;border-top:none"></div>
<div style="left:159px;top:365px;width:415px;height:1px;background:#808080"></div>
<div style="left:228px;top:347px;width:1px;height:36px;background:#808080"></div>
<div style="left:297px;top:347px;width:1px;height:36px;background:#808080"></div>
<div style="left:366px;top:347px;width:1px;height:36px;background:#808080"></div>
<div style="left:435px;top:347px;width:1px;height:36px;background:#808080"></div>
<div style="left:504px;top:347px;width:1px;height:36px;background:#808080"></div>
<div style="left:38px;top:327px;width:1px;height:24px;background:repeating-linear-gradient(#7a7a7a 0 1px,transparent 1px 2px)"></div>
<div style="left:34px;top:352px;width:9px;height:9px;border:1px solid #808080;background:#fff"></div>
<div style="left:36px;top:356px;width:5px;height:1px;background:#000"></div>
<div style="left:44px;top:356px;width:4px;height:1px;background:repeating-linear-gradient(to right,#7a7a7a 0 1px,transparent 1px 2px)"></div>
<svg style="left:49px;top:350px" width="14" height="12" viewBox="0 0 14 12"><rect x="0.5" y="0.5" width="11" height="10" rx="1" fill="#cfcfcf" stroke="#888"/><rect x="2" y="2" width="8" height="5" fill="#3b6fd8"/><rect x="2" y="8" width="6" height="1.5" fill="#888"/><circle cx="10" cy="8.5" r="3.2" fill="#f0b020" stroke="#c08000" stroke-width="0.8"/><circle cx="10" cy="8.5" r="1" fill="#fff"/></svg>
<div class="t" style="left:63px;top:349px;letter-spacing:-0.15px">Digite o nome do ...</div>
<div style="left:53px;top:365px;width:1px;height:9px;background:repeating-linear-gradient(#7a7a7a 0 1px,transparent 1px 2px)"></div>
<div style="left:54px;top:374px;width:7px;height:1px;background:repeating-linear-gradient(to right,#7a7a7a 0 1px,transparent 1px 2px)"></div>
<svg style="left:65px;top:369px" width="11" height="11" viewBox="0 0 11 11"><rect x="0.5" y="0.5" width="10" height="10" rx="1.5" fill="#d8d8d8" stroke="#8a8a8a"/><rect x="1.5" y="1.5" width="8" height="5" fill="#2e5ed0"/><rect x="1.5" y="1.5" width="8" height="1.5" fill="#6a90e8"/><rect x="2" y="8" width="7" height="1.2" fill="#8a8a8a"/></svg>
<div class="t" style="left:77px;top:368px;letter-spacing:-0.15px">Digite o nome ...</div>
<div style="left:31px;top:386px;width:547px;height:16px;background:#f5f2e3"></div>
<div style="left:19px;top:389px;width:9px;height:9px;border:1px solid #808080;background:#fff"></div>
<div style="left:21px;top:393px;width:5px;height:1px;background:#000"></div>
<div style="left:29px;top:393px;width:2px;height:1px;background:repeating-linear-gradient(to right,#7a7a7a 0 1px,transparent 1px 2px)"></div>
<svg style="left:31px;top:386px" width="16" height="16" viewBox="0 0 16 16"><ellipse cx="8" cy="7" rx="7" ry="6" fill="#d8e6f8" stroke="#6f8fbf"/><path d="M6 12l-1 3 4-2.5z" fill="#d8e6f8" stroke="#6f8fbf" stroke-width="0.8"/><text x="8" y="11" font-family="Liberation Sans" font-weight="bold" font-size="10" text-anchor="middle" fill="#2040a0">?</text></svg>
<div class="t" style="left:46px;top:388px;font-weight:bold;letter-spacing:0.45px;-webkit-text-stroke:0.3px #000">Exchange</div>
<div class="t" style="left:195px;top:388px;font-weight:bold;letter-spacing:0.45px;-webkit-text-stroke:0.3px #000">Editando</div>
<div class="t" style="left:291px;top:388px;font-weight:bold;letter-spacing:0.45px;-webkit-text-stroke:0.3px #000">DR</div>
<div class="t" style="left:387px;top:388px;font-weight:bold;letter-spacing:0.45px;-webkit-text-stroke:0.3px #000">Exchange</div>
<div class="t" style="left:483px;top:388px;font-weight:bold;letter-spacing:0.45px;-webkit-text-stroke:0.3px #000">Online</div>
<div style="left:46px;top:403px;width:528px;height:20px;border:1px dotted #000"></div>
<div style="left:159px;top:403px;width:1px;height:20px;background:repeating-linear-gradient(#000 0 1px,transparent 1px 2px)"></div>
<div style="left:228px;top:403px;width:1px;height:20px;background:repeating-linear-gradient(#000 0 1px,transparent 1px 2px)"></div>
<div style="left:297px;top:403px;width:1px;height:20px;background:repeating-linear-gradient(#000 0 1px,transparent 1px 2px)"></div>
<div style="left:366px;top:403px;width:1px;height:20px;background:repeating-linear-gradient(#000 0 1px,transparent 1px 2px)"></div>
<div style="left:435px;top:403px;width:1px;height:20px;background:repeating-linear-gradient(#000 0 1px,transparent 1px 2px)"></div>
<div style="left:504px;top:403px;width:1px;height:20px;background:repeating-linear-gradient(#000 0 1px,transparent 1px 2px)"></div>
<div class="t" style="left:47px;top:408px;width:112px;text-align:center;font-size:10px">Hosts</div>
<div class="t" style="left:160px;top:408px;width:68px;text-align:center;font-size:10px">Alterado</div>
<div class="t" style="left:229px;top:408px;width:68px;text-align:center;font-size:10px">Dados envi...</div>
<div class="t" style="left:298px;top:408px;width:68px;text-align:center;font-size:10px">Arquivos e...</div>
<div class="t" style="left:367px;top:408px;width:68px;text-align:center;font-size:10px">Dados rece...</div>
<div class="t" style="left:436px;top:408px;width:68px;text-align:center;font-size:10px">Arquivos r...</div>
<div class="t" style="left:505px;top:408px;width:68px;text-align:center;font-size:10px">No spool</div>
<div style="left:159px;top:423px;width:415px;height:36px;border:1px solid #808080;border-top:none"></div>
<div style="left:159px;top:441px;width:415px;height:1px;background:#808080"></div>
<div style="left:228px;top:423px;width:1px;height:36px;background:#808080"></div>
<div style="left:297px;top:423px;width:1px;height:36px;background:#808080"></div>
<div style="left:366px;top:423px;width:1px;height:36px;background:#808080"></div>
<div style="left:435px;top:423px;width:1px;height:36px;background:#808080"></div>
<div style="left:504px;top:423px;width:1px;height:36px;background:#808080"></div>
<div style="left:38px;top:403px;width:1px;height:24px;background:repeating-linear-gradient(#7a7a7a 0 1px,transparent 1px 2px)"></div>
<div style="left:34px;top:428px;width:9px;height:9px;border:1px solid #808080;background:#fff"></div>
<div style="left:36px;top:432px;width:5px;height:1px;background:#000"></div>
<div style="left:44px;top:432px;width:4px;height:1px;background:repeating-linear-gradient(to right,#7a7a7a 0 1px,transparent 1px 2px)"></div>
<svg style="left:49px;top:426px" width="14" height="12" viewBox="0 0 14 12"><rect x="0.5" y="0.5" width="11" height="10" rx="1" fill="#cfcfcf" stroke="#888"/><rect x="2" y="2" width="8" height="5" fill="#3b6fd8"/><rect x="2" y="8" width="6" height="1.5" fill="#888"/><circle cx="10" cy="8.5" r="3.2" fill="#f0b020" stroke="#c08000" stroke-width="0.8"/><circle cx="10" cy="8.5" r="1" fill="#fff"/></svg>
<div class="t" style="left:63px;top:425px;letter-spacing:-0.15px">Digite o nome do ...</div>
<div style="left:53px;top:441px;width:1px;height:9px;background:repeating-linear-gradient(#7a7a7a 0 1px,transparent 1px 2px)"></div>
<div style="left:54px;top:450px;width:7px;height:1px;background:repeating-linear-gradient(to right,#7a7a7a 0 1px,transparent 1px 2px)"></div>
<svg style="left:65px;top:445px" width="11" height="11" viewBox="0 0 11 11"><rect x="0.5" y="0.5" width="10" height="10" rx="1.5" fill="#d8d8d8" stroke="#8a8a8a"/><rect x="1.5" y="1.5" width="8" height="5" fill="#2e5ed0"/><rect x="1.5" y="1.5" width="8" height="1.5" fill="#6a90e8"/><rect x="2" y="8" width="7" height="1.2" fill="#8a8a8a"/></svg>
<div class="t" style="left:77px;top:444px;letter-spacing:-0.15px">Digite o nome ...</div>
<div style="left:16px;top:462px;width:562px;height:20px;background:#0a246a"></div>
<div style="left:4px;top:467px;width:9px;height:9px;border:1px solid #808080;background:#fff"></div>
<div style="left:6px;top:471px;width:5px;height:1px;background:#000"></div>
<div style="left:14px;top:471px;width:2px;height:1px;background:repeating-linear-gradient(to right,#7a7a7a 0 1px,transparent 1px 2px)"></div>
<svg style="left:17px;top:465px" width="17" height="16" viewBox="0 0 17 16"><path d="M4.5 5v-3.5q0-1 1-1h6q1 0 1 1v3.5" fill="none" stroke="#b8c0d8"/><rect x="6" y="2" width="5" height="3" fill="#3050b0"/><path d="M8.5 5v6" stroke="#b8c0d8" stroke-width="1.2"/><rect x="0.5" y="4.5" width="7.5" height="6" rx="1.2" fill="#fff" stroke="#b8c0d8"/><rect x="9" y="4.5" width="7.5" height="6" rx="1.2" fill="#fff" stroke="#b8c0d8"/><rect x="2" y="6" width="4.5" height="3" fill="#3050b0"/><rect x="10.5" y="6" width="4.5" height="3" fill="#3050b0"/><rect x="1" y="10.5" width="6.5" height="4" rx="1" fill="#8890a8"/><rect x="9.5" y="10.5" width="6.5" height="4" rx="1" fill="#8890a8"/><path d="M2 12.5h3M10.5 12.5h3" stroke="#e0e0e0"/><rect x="7.7" y="10.5" width="1.8" height="4.5" fill="#e0c820"/></svg>
<div class="t" style="left:34px;top:466px;font-weight:bold;letter-spacing:0.15px;color:#fff;-webkit-text-stroke:0.3px #fff">Sharepoint</div>
<div style="left:23px;top:483px;width:1px;height:25px;background:repeating-linear-gradient(#7a7a7a 0 1px,transparent 1px 2px)"></div>
<div style="left:32px;top:485px;width:546px;height:18px;background:#a8a8a8;border-bottom:1px solid #6e6e6e"></div>
<div class="t" style="left:32px;top:489px;width:163px;text-align:center;font-size:10px">Cenário</div>
<div style="left:194px;top:485px;width:1px;height:18px;background:#707070"></div>
<div style="left:195px;top:485px;width:1px;height:18px;background:#e8e8e8"></div>
<div class="t" style="left:195px;top:489px;width:96px;text-align:center;font-size:10px">Estado</div>
<div style="left:290px;top:485px;width:1px;height:18px;background:#707070"></div>
<div style="left:291px;top:485px;width:1px;height:18px;background:#e8e8e8"></div>
<div class="t" style="left:291px;top:489px;width:95px;text-align:center;font-size:10px">Produto</div>
<div style="left:385px;top:485px;width:1px;height:18px;background:#707070"></div>
<div style="left:386px;top:485px;width:1px;height:18px;background:#e8e8e8"></div>
<div class="t" style="left:386px;top:489px;width:96px;text-align:center;font-size:10px">Servidor</div>
<div style="left:481px;top:485px;width:1px;height:18px;background:#707070"></div>
<div style="left:482px;top:485px;width:1px;height:18px;background:#e8e8e8"></div>
<div class="t" style="left:482px;top:489px;width:96px;text-align:center;font-size:10px">Modo</div>
<div style="left:31px;top:504px;width:547px;height:16px;background:#f5f2e3"></div>
<div style="left:19px;top:507px;width:9px;height:9px;border:1px solid #808080;background:#fff"></div>
<div style="left:21px;top:511px;width:5px;height:1px;background:#000"></div>
<div style="left:29px;top:511px;width:2px;height:1px;background:repeating-linear-gradient(to right,#7a7a7a 0 1px,transparent 1px 2px)"></div>
<svg style="left:32px;top:505px" width="14" height="14" viewBox="0 0 14 14"><rect x="6.5" y="0.5" width="6" height="10" fill="#d8d8d8" stroke="#777"/><path d="M8 3h3M8 5h3M8 7h3" stroke="#888"/><rect x="0.5" y="3.5" width="8" height="7" fill="#4a78d8" stroke="#666"/><rect x="0" y="11" width="10" height="2.5" fill="#bbb" stroke="#777" stroke-width="0.6"/></svg>
<div class="t" style="left:46px;top:506px;font-weight:bold;letter-spacing:0.45px;-webkit-text-stroke:0.3px #000">App1</div>
<div class="t" style="left:195px;top:506px;font-weight:bold;letter-spacing:0.45px;-webkit-text-stroke:0.3px #000">Interrompido ...</div>
<div class="t" style="left:291px;top:506px;font-weight:bold;letter-spacing:0.45px;-webkit-text-stroke:0.3px #000">HA/AR</div>
<div class="t" style="left:387px;top:506px;font-weight:bold;letter-spacing:0.45px;-webkit-text-stroke:0.3px #000">FileServer</div>
<div class="t" style="left:483px;top:506px;font-weight:bold;letter-spacing:0.45px;-webkit-text-stroke:0.3px #000">Online</div>
<div style="left:46px;top:521px;width:528px;height:20px;border:1px dotted #000"></div>
<div style="left:159px;top:521px;width:1px;height:20px;background:repeating-linear-gradient(#000 0 1px,transparent 1px 2px)"></div>
<div style="left:228px;top:521px;width:1px;height:20px;background:repeating-linear-gradient(#000 0 1px,transparent 1px 2px)"></div>
<div style="left:297px;top:521px;width:1px;height:20px;background:repeating-linear-gradient(#000 0 1px,transparent 1px 2px)"></div>
<div style="left:366px;top:521px;width:1px;height:20px;background:repeating-linear-gradient(#000 0 1px,transparent 1px 2px)"></div>
<div style="left:435px;top:521px;width:1px;height:20px;background:repeating-linear-gradient(#000 0 1px,transparent 1px 2px)"></div>
<div style="left:504px;top:521px;width:1px;height:20px;background:repeating-linear-gradient(#000 0 1px,transparent 1px 2px)"></div>
<div class="t" style="left:47px;top:526px;width:112px;text-align:center;font-size:10px">Hosts</div>
<div class="t" style="left:160px;top:526px;width:68px;text-align:center;font-size:10px">Alterado</div>
<div class="t" style="left:229px;top:526px;width:68px;text-align:center;font-size:10px">Dados envi...</div>
<div class="t" style="left:298px;top:526px;width:68px;text-align:center;font-size:10px">Arquivos e...</div>
<div class="t" style="left:367px;top:526px;width:68px;text-align:center;font-size:10px">Dados rece...</div>
<div class="t" style="left:436px;top:526px;width:68px;text-align:center;font-size:10px">Arquivos r...</div>
<div class="t" style="left:505px;top:526px;width:68px;text-align:center;font-size:10px">No spool</div>
<div style="left:159px;top:541px;width:415px;height:36px;border:1px solid #808080;border-top:none"></div>
<div style="left:159px;top:559px;width:415px;height:1px;background:#808080"></div>
<div style="left:228px;top:541px;width:1px;height:36px;background:#808080"></div>
<div style="left:297px;top:541px;width:1px;height:36px;background:#808080"></div>
<div style="left:366px;top:541px;width:1px;height:36px;background:#808080"></div>
<div style="left:435px;top:541px;width:1px;height:36px;background:#808080"></div>
<div style="left:504px;top:541px;width:1px;height:36px;background:#808080"></div>
<div style="left:38px;top:521px;width:1px;height:24px;background:repeating-linear-gradient(#7a7a7a 0 1px,transparent 1px 2px)"></div>
<div style="left:34px;top:546px;width:9px;height:9px;border:1px solid #808080;background:#fff"></div>
<div style="left:36px;top:550px;width:5px;height:1px;background:#000"></div>
<div style="left:44px;top:550px;width:4px;height:1px;background:repeating-linear-gradient(to right,#7a7a7a 0 1px,transparent 1px 2px)"></div>
<svg style="left:49px;top:544px" width="14" height="12" viewBox="0 0 14 12"><rect x="0.5" y="0.5" width="11" height="10" rx="1" fill="#cfcfcf" stroke="#888"/><rect x="2" y="2" width="8" height="5" fill="#3b6fd8"/><rect x="2" y="8" width="6" height="1.5" fill="#888"/><circle cx="10" cy="8.5" r="3.2" fill="#f0b020" stroke="#c08000" stroke-width="0.8"/><circle cx="10" cy="8.5" r="1" fill="#fff"/></svg>
<div class="t" style="left:63px;top:543px;letter-spacing:0.2px">155.35.75.141</div>
<div style="left:53px;top:559px;width:1px;height:9px;background:repeating-linear-gradient(#7a7a7a 0 1px,transparent 1px 2px)"></div>
<div style="left:54px;top:568px;width:7px;height:1px;background:repeating-linear-gradient(to right,#7a7a7a 0 1px,transparent 1px 2px)"></div>
<svg style="left:65px;top:563px" width="11" height="11" viewBox="0 0 11 11"><rect x="0.5" y="0.5" width="10" height="10" rx="1.5" fill="#d8d8d8" stroke="#8a8a8a"/><rect x="1.5" y="1.5" width="8" height="5" fill="#2e5ed0"/><rect x="1.5" y="1.5" width="8" height="1.5" fill="#6a90e8"/><rect x="2" y="8" width="7" height="1.2" fill="#8a8a8a"/></svg>
<div class="t" style="left:77px;top:562px;letter-spacing:0.2px">155.35.75.160</div>
<div style="left:16px;top:580px;width:560px;height:16px;background:#dce3ec"></div>
<div style="left:4px;top:583px;width:9px;height:9px;border:1px solid #808080;background:#fff"></div>
<div style="left:6px;top:587px;width:5px;height:1px;background:#000"></div>
<div style="left:14px;top:587px;width:2px;height:1px;background:repeating-linear-gradient(to right,#7a7a7a 0 1px,transparent 1px 2px)"></div>
<svg style="left:18px;top:581px" width="14" height="16" viewBox="0 0 14 16"><path d="M1.5 2.5h10v12h-9l-1-1z" fill="#7f94c8" stroke="#24306a"/><rect x="2.5" y="1" width="9" height="2" fill="#d8a030"/><rect x="3" y="4" width="7" height="6" fill="#dfe6f5"/><path d="M4 6h2M7 6h2M4 8h5" stroke="#5060a0"/><rect x="3" y="11" width="7" height="2" fill="#c8d0e8"/></svg>
<div class="t" style="left:32px;top:582px;font-weight:bold;letter-spacing:0.15px;-webkit-text-stroke:0.3px #000">Modelos</div>
<div style="left:23px;top:597px;width:1px;height:22px;background:repeating-linear-gradient(#7a7a7a 0 1px,transparent 1px 2px)"></div>
<div style="left:32px;top:599px;width:544px;height:18px;background:#a8a8a8;border-bottom:1px solid #6e6e6e"></div>
<div class="t" style="left:32px;top:603px;width:152px;text-align:center;font-size:10px">Modelo</div>
<div style="left:183px;top:599px;width:1px;height:18px;background:#707070"></div>
<div style="left:184px;top:599px;width:1px;height:18px;background:#e8e8e8"></div>
<div class="t" style="left:184px;top:603px;width:98px;text-align:center;font-size:10px">Comentários</div>
<div style="left:281px;top:599px;width:1px;height:18px;background:#707070"></div>
<div style="left:282px;top:599px;width:1px;height:18px;background:#e8e8e8"></div>
<div class="t" style="left:282px;top:603px;width:98px;text-align:center;font-size:10px">Produto</div>
<div style="left:379px;top:599px;width:1px;height:18px;background:#707070"></div>
<div style="left:380px;top:599px;width:1px;height:18px;background:#e8e8e8"></div>
<div class="t" style="left:380px;top:603px;width:98px;text-align:center;font-size:10px">Servidor</div>
<div style="left:477px;top:599px;width:1px;height:18px;background:#707070"></div>
<div style="left:478px;top:599px;width:1px;height:18px;background:#e8e8e8"></div>
<div class="t" style="left:478px;top:603px;width:98px;text-align:center;font-size:10px">Modo</div>
<div style="left:31px;top:616px;width:545px;height:16px;background:#f5f2e3"></div>
<div style="left:19px;top:619px;width:9px;height:9px;border:1px solid #808080;background:#fff"></div>
<div style="left:21px;top:623px;width:5px;height:1px;background:#000"></div>
<div style="left:23px;top:621px;width:1px;height:5px;background:#000"></div>
<div style="left:29px;top:623px;width:2px;height:1px;background:repeating-linear-gradient(to right,#7a7a7a 0 1px,transparent 1px 2px)"></div>
<svg style="left:33px;top:617px" width="14" height="16" viewBox="0 0 14 16"><path d="M1.5 2.5h10v12h-9l-1-1z" fill="#7f94c8" stroke="#24306a"/><rect x="2.5" y="1" width="9" height="2" fill="#d8a030"/><rect x="3" y="4" width="7" height="6" fill="#dfe6f5"/><path d="M4 6h2M7 6h2M4 8h5" stroke="#5060a0"/><rect x="3" y="11" width="7" height="2" fill="#c8d0e8"/></svg>
<div class="t" style="left:47px;top:618px;font-weight:bold;letter-spacing:0.45px;-webkit-text-stroke:0.3px #000">FileServer</div>
<div class="t" style="left:283px;top:618px;font-weight:bold;letter-spacing:0.45px;-webkit-text-stroke:0.3px #000">DR</div>
<div class="t" style="left:381px;top:618px;font-weight:bold;letter-spacing:0.45px;-webkit-text-stroke:0.3px #000">FileServer</div>
<div class="t" style="left:479px;top:618px;font-weight:bold;letter-spacing:0.45px;-webkit-text-stroke:0.3px #000">Online</div>
<div style="left:586px;top:111px;width:591px;height:619px;background:#fbfaf8"></div>
<div style="left:586px;top:113px;width:591px;height:553px;background:#fff;border-left:1px solid #808080;border-top:1px solid #808080;box-shadow:inset 1px 1px 0 #404040"></div>
<div style="left:588px;top:115px;width:585px;height:23px;background:linear-gradient(#fafaf9,#ebe9e4 70%,#d6d3cb);border-bottom:1px solid #6d6a63"></div>
<div style="left:978px;top:115px;width:1px;height:22px;background:#6d6a63"></div>
<div style="left:979px;top:115px;width:1px;height:22px;background:#fff"></div>
<div style="left:1173px;top:115px;width:1px;height:22px;background:#6d6a63"></div>
<div style="left:1174px;top:115px;width:3px;height:23px;background:#ece9e2"></div>
<div class="t" style="left:589px;top:121px;width:390px;text-align:center;font-size:12px;letter-spacing:0.1px">Propriedade</div>
<div class="t" style="left:979px;top:121px;width:194px;text-align:center;font-size:12px;letter-spacing:0.1px">Valor</div>
<div style="left:588px;top:138px;width:585px;height:21px;background:#d4d0c8"></div>
<div style="left:599px;top:144px;width:9px;height:9px;border:1px solid #b0aca4;background:transparent"></div>
<div style="left:601px;top:148px;width:5px;height:1px;background:#a8a49c"></div>
<div style="left:603px;top:146px;width:1px;height:5px;background:#a8a49c"></div>
<svg style="left:610px;top:140px" width="15" height="17" viewBox="0 0 15 17"><rect x="4.5" y="4.5" width="9" height="11" fill="#fde8b8" stroke="#7a4e0c"/><rect x="2.5" y="2.5" width="9" height="11" fill="#fde8b8" stroke="#7a4e0c"/><rect x="0.5" y="0.5" width="9" height="11" fill="#f3b862" stroke="#7a4e0c"/><rect x="1" y="1" width="8" height="2" fill="#fcd898"/><path d="M2 4.5h1M4 4.5h4M2 6.5h1M4 6.5h4M2 8.5h1M4 8.5h4" stroke="#8a5a10"/></svg>
<div class="t" style="left:627px;top:143px;font-weight:bold;font-size:12px;letter-spacing:0.6px;color:#404040;-webkit-text-stroke:0.25px #404040">Geral</div>
<div style="left:588px;top:159px;width:585px;height:20px;background:#d4d0c8"></div>
<div style="left:599px;top:164px;width:9px;height:9px;border:1px solid #b0aca4;background:transparent"></div>
<div style="left:601px;top:168px;width:5px;height:1px;background:#a8a49c"></div>
<div style="left:603px;top:166px;width:1px;height:5px;background:#a8a49c"></div>
<svg style="left:610px;top:160px" width="15" height="17" viewBox="0 0 15 17"><rect x="4.5" y="4.5" width="9" height="11" fill="#fde8b8" stroke="#7a4e0c"/><rect x="2.5" y="2.5" width="9" height="11" fill="#fde8b8" stroke="#7a4e0c"/><rect x="0.5" y="0.5" width="9" height="11" fill="#f3b862" stroke="#7a4e0c"/><rect x="1" y="1" width="8" height="2" fill="#fcd898"/><path d="M2 4.5h1M4 4.5h4M2 6.5h1M4 6.5h4M2 8.5h1M4 8.5h4" stroke="#8a5a10"/></svg>
<div class="t" style="left:627px;top:163px;font-weight:bold;font-size:12px;letter-spacing:0.6px;color:#404040;-webkit-text-stroke:0.25px #404040">Dependências do cenário</div>
<div style="left:588px;top:179px;width:585px;height:20px;background:#d4d0c8"></div>
<div style="left:599px;top:184px;width:9px;height:9px;border:1px solid #b0aca4;background:transparent"></div>
<div style="left:601px;top:188px;width:5px;height:1px;background:#a8a49c"></div>
<svg style="left:610px;top:180px" width="15" height="17" viewBox="0 0 15 17"><rect x="4.5" y="4.5" width="9" height="11" fill="#fde8b8" stroke="#7a4e0c"/><rect x="2.5" y="2.5" width="9" height="11" fill="#fde8b8" stroke="#7a4e0c"/><rect x="0.5" y="0.5" width="9" height="11" fill="#f3b862" stroke="#7a4e0c"/><rect x="1" y="1" width="8" height="2" fill="#fcd898"/><path d="M2 4.5h1M4 4.5h4M2 6.5h1M4 6.5h4M2 8.5h1M4 8.5h4" stroke="#8a5a10"/></svg>
<div class="t" style="left:627px;top:183px;font-weight:bold;font-size:12px;letter-spacing:0.6px;color:#404040;-webkit-text-stroke:0.25px #404040">Configurações de alternância</div>
<div style="left:588px;top:199px;width:585px;height:20px;background:#fff"></div>
<div style="left:588px;top:218px;width:585px;height:1px;background:#d4d0c8"></div>
<div style="left:978px;top:199px;width:1px;height:20px;background:#d4d0c8"></div>
<div style="left:618px;top:204px;width:9px;height:9px;border:1px solid #808080;background:#fff"></div>
<div style="left:620px;top:208px;width:5px;height:1px;background:#000"></div>
<svg style="left:629px;top:200px" width="15" height="17" viewBox="0 0 15 17"><rect x="4.5" y="4.5" width="9" height="11" fill="#fde8b8" stroke="#7a4e0c"/><rect x="2.5" y="2.5" width="9" height="11" fill="#fde8b8" stroke="#7a4e0c"/><rect x="0.5" y="0.5" width="9" height="11" fill="#f3b862" stroke="#7a4e0c"/><rect x="1" y="1" width="8" height="2" fill="#fcd898"/><path d="M2 4.5h1M4 4.5h4M2 6.5h1M4 6.5h4M2 8.5h1M4 8.5h4" stroke="#8a5a10"/></svg>
<div class="t" style="left:646px;top:203px;width:332px;color:#000;font-size:12px;letter-spacing:0.16px;overflow:hidden">Alternar como um grupo</div>
<div class="t" style="left:982px;top:203px;color:#000;font-size:12px;letter-spacing:0.15px">Ativado</div>
<div style="left:588px;top:219px;width:585px;height:20px;background:#fff"></div>
<div style="left:588px;top:238px;width:585px;height:1px;background:#d4d0c8"></div>
<div style="left:978px;top:219px;width:1px;height:20px;background:#d4d0c8"></div>
<div style="left:637px;top:224px;width:9px;height:9px;border:1px solid #808080;background:#fff"></div>
<div style="left:639px;top:228px;width:5px;height:1px;background:#000"></div>
<svg style="left:648px;top:220px" width="15" height="17" viewBox="0 0 15 17"><rect x="4.5" y="4.5" width="9" height="11" fill="#fde8b8" stroke="#7a4e0c"/><rect x="2.5" y="2.5" width="9" height="11" fill="#fde8b8" stroke="#7a4e0c"/><rect x="0.5" y="0.5" width="9" height="11" fill="#f3b862" stroke="#7a4e0c"/><rect x="1" y="1" width="8" height="2" fill="#fcd898"/><path d="M2 4.5h1M4 4.5h4M2 6.5h1M4 6.5h4M2 8.5h1M4 8.5h4" stroke="#8a5a10"/></svg>
<div class="t" style="left:665px;top:223px;width:313px;color:#000;font-size:12px;letter-spacing:0.16px;overflow:hidden">Falha de alternância do grupo de disparadores</div>
<div style="left:588px;top:239px;width:585px;height:20px;background:#fff"></div>
<div style="left:588px;top:258px;width:585px;height:1px;background:#d4d0c8"></div>
<div style="left:978px;top:239px;width:1px;height:20px;background:#d4d0c8"></div>
<svg style="left:668px;top:240px" width="13" height="16" viewBox="0 0 13 16"><path d="M1.5 15.5h11v-13" stroke="#b8b0a0" fill="none" opacity="0.6"/><rect x="0.5" y="0.5" width="11" height="14" fill="#f3b862" stroke="#7a4e0c"/><rect x="1" y="1" width="10" height="3" fill="#fcd898"/><rect x="1" y="12" width="10" height="2" fill="#fde8b8"/><path d="M3 6.5h1M5 6.5h4M3 8.5h1M5 8.5h4M3 10.5h1M5 10.5h4" stroke="#8a5a10"/></svg>
<div class="t" style="left:683px;top:243px;width:295px;color:#000;font-size:12px;letter-spacing:0.16px;overflow:hidden">Cenário [App1]</div>
<div class="t" style="left:982px;top:243px;color:#000;font-size:12px;letter-spacing:0.15px">Ativado</div>
<div style="left:588px;top:259px;width:585px;height:20px;background:#fff"></div>
<div style="left:588px;top:278px;width:585px;height:1px;background:#d4d0c8"></div>
<div style="left:978px;top:259px;width:1px;height:20px;background:#d4d0c8"></div>
<div style="left:637px;top:264px;width:9px;height:9px;border:1px solid #808080;background:#fff"></div>
<div style="left:639px;top:268px;width:5px;height:1px;background:#000"></div>
<svg style="left:648px;top:260px" width="15" height="17" viewBox="0 0 15 17"><rect x="4.5" y="4.5" width="9" height="11" fill="#fde8b8" stroke="#7a4e0c"/><rect x="2.5" y="2.5" width="9" height="11" fill="#fde8b8" stroke="#7a4e0c"/><rect x="0.5" y="0.5" width="9" height="11" fill="#f3b862" stroke="#7a4e0c"/><rect x="1" y="1" width="8" height="2" fill="#fcd898"/><path d="M2 4.5h1M4 4.5h4M2 6.5h1M4 6.5h4M2 8.5h1M4 8.5h4" stroke="#8a5a10"/></svg>
<div class="t" style="left:665px;top:263px;width:313px;color:#000;font-size:12px;letter-spacing:0.06px;overflow:hidden">Ações para quando não for possível alternar como um g...</div>
<div style="left:588px;top:279px;width:585px;height:18px;background:#fff"></div>
<div style="left:978px;top:279px;width:1px;height:18px;background:#d4d0c8"></div>
<svg style="left:668px;top:280px" width="13" height="16" viewBox="0 0 13 16"><path d="M1.5 15.5h11v-13" stroke="#b8b0a0" fill="none" opacity="0.6"/><rect x="0.5" y="0.5" width="11" height="14" fill="#f3b862" stroke="#7a4e0c"/><rect x="1" y="1" width="10" height="3" fill="#fcd898"/><rect x="1" y="12" width="10" height="2" fill="#fde8b8"/><path d="M3 6.5h1M5 6.5h4M3 8.5h1M5 8.5h4M3 10.5h1M5 10.5h4" stroke="#8a5a10"/></svg>
<div class="t" style="left:683px;top:283px;width:295px;color:#000;font-size:12px;letter-spacing:0.16px;overflow:hidden">Executar as configurações de alternância do cenário</div>
<div class="t" style="left:982px;top:283px;color:#000;font-size:12px;letter-spacing:0.15px">Ativado</div>
<div style="left:588px;top:297px;width:585px;height:22px;background:#d4d0c8"></div>
<div style="left:618px;top:304px;width:9px;height:9px;border:1px solid #b0aca4;background:transparent"></div>
<div style="left:620px;top:308px;width:5px;height:1px;background:#a8a49c"></div>
<svg style="left:629px;top:300px" width="15" height="17" viewBox="0 0 15 17"><rect x="4.5" y="4.5" width="9" height="11" fill="#fde8b8" stroke="#7a4e0c"/><rect x="2.5" y="2.5" width="9" height="11" fill="#fde8b8" stroke="#7a4e0c"/><rect x="0.5" y="0.5" width="9" height="11" fill="#f3b862" stroke="#7a4e0c"/><rect x="1" y="1" width="8" height="2" fill="#fcd898"/><path d="M2 4.5h1M4 4.5h4M2 6.5h1M4 6.5h4M2 8.5h1M4 8.5h4" stroke="#8a5a10"/></svg>
<div class="t" style="left:646px;top:303px;font-weight:bold;font-size:12px;letter-spacing:0.6px;color:#404040;-webkit-text-stroke:0.25px #404040">Conjuntos de cenários de disponibilidade</div>
<div style="left:588px;top:319px;width:585px;height:20px;background:#fff"></div>
<div style="left:588px;top:338px;width:585px;height:1px;background:#d4d0c8"></div>
<div style="left:978px;top:319px;width:1px;height:20px;background:#d4d0c8"></div>
<div style="left:637px;top:324px;width:9px;height:9px;border:1px solid #808080;background:#fff"></div>
<div style="left:639px;top:328px;width:5px;height:1px;background:#000"></div>
<svg style="left:648px;top:320px" width="15" height="17" viewBox="0 0 15 17"><rect x="4.5" y="4.5" width="9" height="11" fill="#fde8b8" stroke="#7a4e0c"/><rect x="2.5" y="2.5" width="9" height="11" fill="#fde8b8" stroke="#7a4e0c"/><rect x="0.5" y="0.5" width="9" height="11" fill="#f3b862" stroke="#7a4e0c"/><rect x="1" y="1" width="8" height="2" fill="#fcd898"/><path d="M2 4.5h1M4 4.5h4M2 6.5h1M4 6.5h4M2 8.5h1M4 8.5h4" stroke="#8a5a10"/></svg>
<div class="t" style="left:665px;top:323px;width:313px;color:#000;font-size:12px;letter-spacing:0.16px;overflow:hidden">Conjunto de cenários</div>
<div class="t" style="left:982px;top:323px;color:#000;font-size:12px;letter-spacing:0.15px">nome</div>
<div style="left:588px;top:339px;width:585px;height:19px;background:#fff"></div>
<div style="left:588px;top:358px;width:585px;height:1px;background:#d4d0c8"></div>
<div style="left:978px;top:339px;width:1px;height:19px;background:#d4d0c8"></div>
<div style="left:588px;top:339px;width:390px;height:19px;background:#0a246a"></div>
<div style="left:979px;top:339px;width:194px;height:19px;background:#0a246a"></div>
<svg style="left:668px;top:340px" width="13" height="16" viewBox="0 0 13 16"><path d="M1.5 15.5h11v-13" stroke="#b8b0a0" fill="none" opacity="0.6"/><rect x="0.5" y="0.5" width="11" height="14" fill="#f3b862" stroke="#7a4e0c"/><rect x="1" y="1" width="10" height="3" fill="#fcd898"/><rect x="1" y="12" width="10" height="2" fill="#fde8b8"/><path d="M3 6.5h1M5 6.5h4M3 8.5h1M5 8.5h4M3 10.5h1M5 10.5h4" stroke="#8a5a10"/></svg>
<div class="t" style="left:683px;top:343px;width:295px;color:#fff;font-size:12px;letter-spacing:0.16px;overflow:hidden">Nome do cenário</div>
<div class="t" style="left:982px;top:343px;color:#fff;font-size:12px;letter-spacing:0.15px">App1</div>
<div style="left:588px;top:359px;width:585px;height:20px;background:#fff"></div>
<div style="left:588px;top:378px;width:585px;height:1px;background:#d4d0c8"></div>
<div style="left:978px;top:359px;width:1px;height:20px;background:#d4d0c8"></div>
<svg style="left:668px;top:360px" width="13" height="16" viewBox="0 0 13 16"><path d="M1.5 15.5h11v-13" stroke="#b8b0a0" fill="none" opacity="0.6"/><rect x="0.5" y="0.5" width="11" height="14" fill="#f3b862" stroke="#7a4e0c"/><rect x="1" y="1" width="10" height="3" fill="#fcd898"/><rect x="1" y="12" width="10" height="2" fill="#fde8b8"/><path d="M3 6.5h1M5 6.5h4M3 8.5h1M5 8.5h4M3 10.5h1M5 10.5h4" stroke="#8a5a10"/></svg>
<div class="t" style="left:683px;top:363px;width:295px;color:#000;font-size:12px;letter-spacing:0.16px;overflow:hidden">Nome do cenário</div>
<div style="left:588px;top:379px;width:585px;height:20px;background:#fff"></div>
<div style="left:588px;top:398px;width:585px;height:1px;background:#d4d0c8"></div>
<div style="left:978px;top:379px;width:1px;height:20px;background:#d4d0c8"></div>
<div style="left:637px;top:384px;width:9px;height:9px;border:1px solid #808080;background:#fff"></div>
<div style="left:639px;top:388px;width:5px;height:1px;background:#000"></div>
<svg style="left:649px;top:380px" width="13" height="16" viewBox="0 0 13 16"><path d="M1.5 15.5h11v-13" stroke="#b8b0a0" fill="none" opacity="0.6"/><rect x="0.5" y="0.5" width="11" height="14" fill="#f3b862" stroke="#7a4e0c"/><rect x="1" y="1" width="10" height="3" fill="#fcd898"/><rect x="1" y="12" width="10" height="2" fill="#fde8b8"/><path d="M3 6.5h1M5 6.5h4M3 8.5h1M5 8.5h4M3 10.5h1M5 10.5h4" stroke="#8a5a10"/></svg>
<div class="t" style="left:664px;top:383px;width:314px;color:#000;font-size:12px;letter-spacing:0.16px;overflow:hidden">Conjunto de cenários</div>
<div class="t" style="left:982px;top:383px;color:#000;font-size:12px;letter-spacing:0.15px">[Inserir nome]</div>
<div style="left:588px;top:399px;width:585px;height:18px;background:#fff"></div>
<div style="left:978px;top:399px;width:1px;height:18px;background:#d4d0c8"></div>
<svg style="left:668px;top:400px" width="13" height="16" viewBox="0 0 13 16"><path d="M1.5 15.5h11v-13" stroke="#b8b0a0" fill="none" opacity="0.6"/><rect x="0.5" y="0.5" width="11" height="14" fill="#f3b862" stroke="#7a4e0c"/><rect x="1" y="1" width="10" height="3" fill="#fcd898"/><rect x="1" y="12" width="10" height="2" fill="#fde8b8"/><path d="M3 6.5h1M5 6.5h4M3 8.5h1M5 8.5h4M3 10.5h1M5 10.5h4" stroke="#8a5a10"/></svg>
<div class="t" style="left:683px;top:403px;width:295px;color:#000;font-size:12px;letter-spacing:0.16px;overflow:hidden">Nome do cenário</div>
<div class="t" style="left:982px;top:403px;color:#000;font-size:12px;letter-spacing:0.15px">[Selecionar cenário]</div>
<div style="left:588px;top:417px;width:585px;height:21px;background:#d4d0c8"></div>
<div style="left:599px;top:424px;width:9px;height:9px;border:1px solid #b0aca4;background:transparent"></div>
<div style="left:601px;top:428px;width:5px;height:1px;background:#a8a49c"></div>
<div style="left:603px;top:426px;width:1px;height:5px;background:#a8a49c"></div>
<svg style="left:610px;top:420px" width="15" height="17" viewBox="0 0 15 17"><rect x="4.5" y="4.5" width="9" height="11" fill="#fde8b8" stroke="#7a4e0c"/><rect x="2.5" y="2.5" width="9" height="11" fill="#fde8b8" stroke="#7a4e0c"/><rect x="0.5" y="0.5" width="9" height="11" fill="#f3b862" stroke="#7a4e0c"/><rect x="1" y="1" width="8" height="2" fill="#fcd898"/><path d="M2 4.5h1M4 4.5h4M2 6.5h1M4 6.5h4M2 8.5h1M4 8.5h4" stroke="#8a5a10"/></svg>
<div class="t" style="left:627px;top:422px;font-weight:bold;font-size:12px;letter-spacing:0.6px;color:#404040;-webkit-text-stroke:0.25px #404040">Notificação de evento</div>
<div style="left:1157px;top:339px;width:16px;height:18px;background:#d4d0c8;border-top:1px solid #fff;border-left:1px solid #fff;border-right:1px solid #404040;border-bottom:1px solid #404040;box-shadow:inset -1px -1px 0 #808080"></div>
<svg style="left:1161px;top:346px" width="8" height="5"><path d="M0 0h7l-3.5 4z" fill="#000"/></svg>
<div style="left:977px;top:357px;width:196px;height:32px;background:#fff;border:1px solid #000"></div>
<div style="left:978px;top:358px;width:194px;height:15px;background:#0a246a"></div>
<div class="t" style="left:980px;top:360px;color:#fff;font-size:12px">App1</div>
<div class="t" style="left:980px;top:375px;font-size:12px">[Selecionar cenário]</div>
<div style="left:586px;top:666px;width:591px;height:1px;background:#f4f3f0"></div>
<div style="left:586px;top:667px;width:591px;height:39px;background:#d4d0c8"></div>
<div class="t" style="left:588px;top:672px;letter-spacing:-0.145px">Escolha os cenários que devem estar no mesmo 'conjunto de cenários de disponibilidade'. Um cenário pode ser removido</div>
<div class="t" style="left:588px;top:685px;letter-spacing:-0.085px">do conjunto, basta clicar no botão Excluir. Observação: nenhum cenário pode ser configurado em mais de um conjunto.</div>
<div style="left:586px;top:706px;width:591px;height:24px;background:linear-gradient(to right,#dcd9d1,#e6e4de 50%,#efeee9)"></div>
<div style="left:586px;top:666px;width:1px;height:64px;background:#8a8a8a"></div>
<div style="left:665px;top:710px;width:89px;height:20px;background:#fff;border:1px solid #000;border-top:none;border-radius:0 0 4px 4px"></div>
<svg style="left:588px;top:712px" width="17" height="16" viewBox="0 0 17 16"><path d="M0.5 0v15.5h16" stroke="#2838a0" fill="none"/><rect x="2.5" y="3.5" width="3" height="11" fill="#f0a030" stroke="#a06010"/><rect x="7.5" y="7.5" width="3" height="7" fill="#78c840" stroke="#3a8010"/><rect x="12.5" y="10.5" width="3" height="4" fill="#8ca8f0" stroke="#3050b0"/></svg>
<svg style="left:668px;top:712px" width="15" height="17" viewBox="0 0 15 17"><rect x="4.5" y="4.5" width="9" height="11" fill="#fde8b8" stroke="#7a4e0c"/><rect x="2.5" y="2.5" width="9" height="11" fill="#fde8b8" stroke="#7a4e0c"/><rect x="0.5" y="0.5" width="9" height="11" fill="#f3b862" stroke="#7a4e0c"/><rect x="1" y="1" width="8" height="2" fill="#fcd898"/><path d="M2 4.5h1M4 4.5h4M2 6.5h1M4 6.5h4M2 8.5h1M4 8.5h4" stroke="#8a5a10"/></svg>
<div class="t" style="left:606px;top:713px;">Estatísticas</div>
<div class="t" style="left:686px;top:713px;letter-spacing:-0.2px">Propriedades</div>
<div style="left:0px;top:730px;width:1177px;height:4px;background:linear-gradient(to right,#e6e4de,#f1f0ec)"></div>
<div style="left:0px;top:734px;width:1177px;height:20px;background:#808080"></div>
<div class="t" style="left:1px;top:737px;color:#d4d0c8;letter-spacing:-0.2px">Eventos</div>
<svg style="left:1122px;top:738px" width="52" height="13"><path d="M2 6h8l-4 4.5z" fill="#d4d0c8"/><path d="M24.5 2.5h4v4.5h-4z" fill="none" stroke="#d4d0c8"/><rect x="27" y="2" width="1.2" height="5" fill="#d4d0c8"/><path d="M22 7.5h8M26 8v3.5" stroke="#d4d0c8" fill="none"/><path d="M42 3l7 7M49 3l-7 7" stroke="#d4d0c8" stroke-width="1"/></svg>
<div style="left:0px;top:754px;width:1177px;height:3px;background:#fff"></div>
<div style="left:0px;top:756px;width:1177px;height:1px;background:#6d6a63"></div>
<div style="left:0px;top:757px;width:1177px;height:51px;background:#fff"></div>
<div style="left:0px;top:757px;width:115px;height:23px;background:linear-gradient(#fbfbfa,#efede8 70%,#d8d5cd);border-right:1px solid #8c8983;border-bottom:1px solid #6d6a63;border-left:1px solid #fff"></div>
<div class="t" style="left:7px;top:762px;font-size:10.5px">ID</div>
<div style="left:116px;top:757px;width:57px;height:23px;background:linear-gradient(#fbfbfa,#efede8 70%,#d8d5cd);border-right:1px solid #8c8983;border-bottom:1px solid #6d6a63;border-left:1px solid #fff"></div>
<div class="t" style="left:123px;top:762px;font-size:10.5px">Sequên</div>
<div style="left:174px;top:757px;width:115px;height:23px;background:linear-gradient(#fbfbfa,#efede8 70%,#d8d5cd);border-right:1px solid #8c8983;border-bottom:1px solid #6d6a63;border-left:1px solid #fff"></div>
<div class="t" style="left:181px;top:762px;font-size:10.5px">Gravidade</div>
<div style="left:290px;top:757px;width:173px;height:23px;background:linear-gradient(#fbfbfa,#efede8 70%,#d8d5cd);border-right:1px solid #8c8983;border-bottom:1px solid #6d6a63;border-left:1px solid #fff"></div>
<div class="t" style="left:297px;top:762px;font-size:10.5px">Host/cenário</div>
<div style="left:464px;top:757px;width:231px;height:23px;background:linear-gradient(#fbfbfa,#efede8 70%,#d8d5cd);border-right:1px solid #8c8983;border-bottom:1px solid #6d6a63;border-left:1px solid #fff"></div>
<div class="t" style="left:471px;top:762px;font-size:10.5px">Hora</div>
<div style="left:696px;top:757px;width:465px;height:23px;background:linear-gradient(#fbfbfa,#efede8 70%,#d8d5cd);border-right:1px solid #8c8983;border-bottom:1px solid #6d6a63;border-left:1px solid #fff"></div>
<div class="t" style="left:703px;top:762px;font-size:10.5px">Evento</div>
<svg style="left:161px;top:764px" width="9" height="8"><path d="M0.5 0.5h7.5l-3.75 6.5z" fill="#f4f3ef" stroke="#8a8780"/><path d="M2 1.5h4.5" stroke="#fff"/></svg>
<div style="left:0px;top:808px;width:1177px;height:1px;background:#a0a0a0"></div>
<div style="left:0px;top:809px;width:1177px;height:25px;background:linear-gradient(to right,#dcd9d1,#e8e6e1 50%,#f1f0ec)"></div>
<div style="left:48px;top:809px;width:177px;height:21px;background:#d9d6ce"></div>
<div style="left:0px;top:810px;width:47px;height:21px;background:#fff;border:1px solid #000;border-left:none;border-top:none;border-radius:0 0 4px 4px"></div>
<div class="t" style="left:3px;top:814px;">Eventos</div>
<div class="t" style="left:50px;top:814px;">Resultados da validação do cenário</div>
</body></html>
